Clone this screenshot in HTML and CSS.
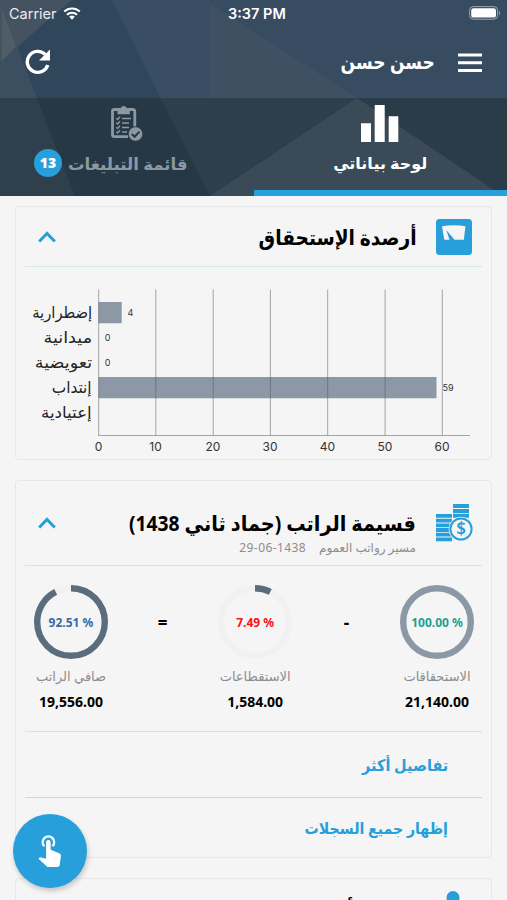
FILE: index.html
```html
<!DOCTYPE html>
<html lang="ar" dir="rtl">
<head>
<meta charset="utf-8">
<title>لوحة بياناتي</title>
<link rel="stylesheet" href="styles.css">
</head>
<body>
<div class="screen">
  <header class="top">
    <svg class="facets" viewBox="0 0 507 196" aria-hidden="true">
      <rect width="507" height="98" fill="#374b61"/>
      <path d="M0 0H30L16 38 37 98H0z" fill="#3c4f60"/>
      <path d="M112 0H210V98H160z" fill="#394e63"/>
      <path d="M72 0H112L160 98H37L16 44z" fill="#30465b"/>
      <path d="M0 0H72L40 27 0 62z" fill="#44535f"/>
      <path d="M2 10 16 46 2 61z" fill="#4f5d68"/>
      <path d="M210 3 357 98H210z" fill="#3e5061"/>
      <rect y="98" width="507" height="98" fill="#2b3c49"/>
      <path d="M0 98H37L75 196H0z" fill="#2f404c"/>
      <path d="M37 98H160L210 196H75z" fill="#263845"/>
      <path d="M160 98H357L210 196z" fill="#2d3e4c"/>
      <path d="M357 98 210 196H503z" fill="#3a4a57"/>
    </svg>
    <div class="status" dir="ltr">
      <span class="carrier">Carrier
        <svg width="18" height="13" viewBox="0 0 18 13" fill="none" stroke="#fff" stroke-width="2.1"><path d="M1.2 4.6a11.4 11.4 0 0 1 15.6 0M4 7.7a7.2 7.2 0 0 1 10 0"/><path d="M6.2 9.8a4 4 0 0 1 5.6 0L9 12.7z" fill="#fff" stroke="none"/></svg>
      </span>
      <span class="clock">3:37 PM</span>
      <svg class="battery" width="32" height="14" viewBox="0 0 32 14"><rect x=".6" y=".6" width="28" height="12.6" rx="3.6" fill="none" stroke="#9aa6b1"/><rect x="2.2" y="2.2" width="24.8" height="9.4" rx="2.2" fill="#fff"/><path d="M30 4.6q2 2.4 0 4.8z" fill="#9aa6b1"/></svg>
    </div>
    <div class="bar">
      <svg class="menu" width="24" height="20" viewBox="0 0 24 20" fill="#fff"><path d="M0 .5h24v3H0zM0 8.3h24v3H0zM0 16h24v3H0z"/></svg>
      <h1 class="user"><span class="t">حسن حسن</span></h1>
      <svg class="refresh" width="26" height="26" viewBox="0 0 26 26"><path d="M22.800 16A10.500 10.500 0 1 1 20.200 5.400" fill="none" stroke="#fff" stroke-width="3.400"/><path d="M25 .5V11.500H14z" fill="#fff"/></svg>
    </div>
    <nav class="tabs">
      <a class="tab active">
        <svg width="38" height="37" viewBox="0 0 38 37" fill="#fff"><path d="M0 18.200h10V37H0zM13.700 0h10v37h-10zM27.700 11.200h9.600V37h-9.600z"/></svg>
        <span class="tab-name"><span class="t">لوحة بياناتي</span></span>
      </a>
      <a class="tab notices">
        <svg width="32" height="36" viewBox="0 0 32 36" fill="none" stroke="#8c98a2"><path d="M3.200 4H22a1.800 1.800 0 0 1 1.800 1.800V21M17 31.200H3.400a1.900 1.900 0 0 1-1.900-1.900V5.800A1.800 1.800 0 0 1 3.200 4" stroke-width="2.800"/><path d="M6.500 8.800V5.500q0-2 3-2 .5-3 3.200-3t3.200 3q3 0 3 2v3.300z" fill="#8c98a2" stroke="none"/><path d="M11 13h9M11 17.500h7M11 22h7M11 26.500h5" stroke-width="1.700"/><path d="m5.300 12.700 1.300 1.200 2.400-2.600M5.300 17.200l1.300 1.200L9 15.800M5.300 21.700l1.300 1.200L9 20.300M5.300 26.200l1.300 1.200L9 24.800" stroke-width="1.400"/><circle cx="24.500" cy="28.500" r="7.200" fill="#8c98a2" stroke="#263845" stroke-width=".7"/><path d="m20.800 28.500 2.800 2.800 4.900-5.200" stroke="#263845" stroke-width="2"/></svg>
        <span class="tab-name"><span class="t">قائمة التبليغات</span><b class="badge">13</b></span>
      </a>
    </nav>
  </header>

  <main class="cards">
    <section class="card balances">
      <div class="card-head">
        <svg class="icon" width="36" height="36" viewBox="0 0 36 36"><rect width="36" height="36" rx="3.500" fill="#279fdb"/><path d="M6 7.300Q18 5 29.500 7.300L27.800 20.800H18.500L10.300 11 13.500 20.800H8.300z" fill="#f5f5f5"/></svg>
        <h2 class="title"><span class="t">أرصدة الإستحقاق</span></h2>
        <svg class="chev" width="18" height="12" viewBox="0 0 18 12" fill="none" stroke="#279fdb" stroke-width="3"><path d="m1.200 10.500 7.800-8 7.800 8"/></svg>
      </div>
      <div class="chart" dir="ltr">
        <ul class="labels" dir="rtl">
          <li><span class="t">إضطرارية</span></li><li><span class="t">ميدانية</span></li><li><span class="t">تعويضية</span></li><li><span class="t">إنتداب</span></li><li><span class="t">إعتيادية</span></li>
        </ul>
        <svg class="plot" width="390" height="170" viewBox="90 285 390 170">
          <path d="M98.500 302h23.200v21.300H98.500zM98.500 377h338v21.300h-338z" fill="#8c98a5"/>
          <path d="M98.700 289.500V435.500M155.800 289.500V435.500M213.200 289.500V435.500M270.400 289.500V435.500M327.700 289.500V435.500M385.100 289.500V435.500M442.300 289.500V435.500M98.500 435.500H470" stroke="#555" stroke-opacity=".5" fill="none"/>
          <g class="values"><text x="127.500" y="316.200">4</text><text x="104.800" y="341">0</text><text x="104.800" y="366">0</text><text x="442.500" y="391.300">59</text></g>
          <g class="ticks"><text x="98.500" y="451">0</text><text x="155.500" y="451">10</text><text x="213" y="451">20</text><text x="270" y="451">30</text><text x="327.500" y="451">40</text><text x="385" y="451">50</text><text x="442" y="451">60</text></g>
        </svg>
      </div>
    </section>

    <section class="card payslip">
      <div class="card-head">
        <svg class="icon" width="38" height="38" viewBox="0 0 38 38"><path d="M18 0h16v4H18zM18 4.900h16v4H18zM18 9.800h16v4H18zM1 10h16v3.800H1zM1 14.700h16v3.800H1zM1 19.400h16v3.800H1zM1 24.100h16v3.800H1zM1 28.800h16v3.800H1zM1 33.500h16v3.800H1z" fill="#279fdb"/><circle cx="26" cy="25" r="12.300" fill="#f5f5f5"/><circle cx="26" cy="25" r="10.600" fill="#f5f5f5" stroke="#279fdb" stroke-width="2"/><text class="dollar" x="26" y="31">$</text></svg>
        <div class="heading">
          <h2 class="title"><span class="t">قسيمة الراتب (جماد ثاني 1438)</span></h2>
          <p class="sub"><span class="t name">مسير رواتب العموم</span><span class="date" dir="ltr">29-06-1438</span></p>
        </div>
        <svg class="chev" width="18" height="12" viewBox="0 0 18 12" fill="none" stroke="#279fdb" stroke-width="3"><path d="m1.200 10.500 7.800-8 7.800 8"/></svg>
      </div>
      <div class="gauges">
        <div class="gauge due">
          <div class="ring"><svg viewBox="0 0 74 74"><circle cx="37" cy="37" r="33.800" stroke="#8c98a5"/></svg><b dir="ltr">100.00 %</b></div>
          <p><span class="t">الاستحقاقات</span></p><strong>21,140.00</strong>
        </div>
        <span class="op">-</span>
        <div class="gauge cut">
          <div class="ring"><svg viewBox="0 0 74 74"><circle cx="37" cy="37" r="33.800" stroke="#f1f1f1"/><circle cx="37" cy="37" r="33.800" pathLength="100" stroke="#5b6c7c" stroke-dasharray="7.490 100" transform="rotate(-90 37 37)"/></svg><b dir="ltr">7.49 %</b></div>
          <p><span class="t">الاستقطاعات</span></p><strong>1,584.00</strong>
        </div>
        <span class="op">=</span>
        <div class="gauge net">
          <div class="ring"><svg viewBox="0 0 74 74"><circle cx="37" cy="37" r="33.800" stroke="#f1f1f1"/><circle cx="37" cy="37" r="33.800" pathLength="100" stroke="#5b6c7c" stroke-dasharray="92.510 100" transform="rotate(-90 37 37)"/></svg><b dir="ltr">92.51 %</b></div>
          <p><span class="t">صافي الراتب</span></p><strong>19,556.00</strong>
        </div>
      </div>
      <a class="link more"><span class="t">تفاصيل أكثر</span></a>
      <a class="link all"><span class="t">إظهار جميع السجلات</span></a>
    </section>

    <section class="card next">
      <svg class="icon" width="36" height="40" viewBox="0 0 36 40" fill="#279fdb"><circle cx="18" cy="6.500" r="6.500"/><path d="M5 38q0-20 13-20t13 20z"/></svg>
      <h2 class="title"><span class="t">أ</span></h2>
    </section>
  </main>

  <button class="fab" aria-label="إجراء سريع">
    <svg width="24" height="34" viewBox="0 0 24 34"><path d="M6.300 12.300A5.800 5.800 0 1 1 14.500 12.300" fill="none" stroke="#fff" stroke-width="2.300"/><path d="M8.100 8.400a2.300 2.300 0 0 1 4.600 0V15.800l9 3.700q1.500.8 1.200 2.600L21.700 31q-.4 2-2.200 2H9.500L.5 24.800 2 23.200l6.100 1.500z" fill="#fff"/></svg>
  </button>
</div>
</body>
</html>
```
FILE: styles.css
```css
* { box-sizing: border-box; }
body, h1, h2, p, ul { margin: 0; padding: 0; }
body { font-family: "Noto Sans", "DejaVu Sans", sans-serif; background: #f5f5f5; color: #000; }
svg { display: block; flex: none; }
.t { display: inline-block; white-space: nowrap; transform-origin: right center; }
.screen { position: relative; width: 507px; height: 900px; overflow: hidden; }

.top { position: relative; height: 196px; color: #fff; }
.facets { position: absolute; inset: 0; width: 507px; height: 196px; }
.status { position: relative; display: flex; align-items: center; justify-content: space-between; height: 27px; padding: 0 4px 0 9px; font: 14.500px Inter, sans-serif; }
.carrier { display: flex; align-items: center; gap: 6px; width: 219px; color: #e9edf1; }
.clock { font-weight: 600; font-size: 14.500px; }
.battery { margin: -1px 2px 0 auto; }
.bar { position: relative; display: flex; align-items: center; height: 71px; padding: 0 25px; }
.user { font-size: 20px; margin: -2px 23px 0 0; line-height: 30px; }
.user .t { transform: scaleX(.85); }
.refresh { margin: -2px auto 0 0; }
.tabs { position: relative; display: flex; height: 98px; }
.tab { width: 50%; display: flex; flex-direction: column; align-items: center; padding-top: 7px; color: #8c98a2; }
.tab svg { height: 37px; }
.tab.active { color: #fff; border-bottom: 6px solid #279fdb; }
.tab-name { display: flex; align-items: center; gap: 6px; height: 28px; margin-top: 7px; font-size: 16px; font-weight: 700; }
.notices .tab-name { margin-right: 32px; font-size: 16.500px; }
.badge { width: 28px; height: 28px; border-radius: 50%; background: #279fdb; color: #fff; font-size: 14px; line-height: 28px; text-align: center; }

.cards { display: flex; flex-direction: column; gap: 20px; padding: 10px 15px; }
.card { border: 1.500px solid #e5e7e8; border-radius: 4px; padding: 0 9px; flex: none; }
.balances { height: 254px; }
.payslip { height: 378px; }
.next { height: 100px; display: flex; padding: 12px 20px; gap: 81px; }
.next .title { padding-top: 4px; }
.card-head { display: flex; align-items: center; border-bottom: 1.500px solid #d3e9ee; padding: 0 10px 0 13px; height: 60px; }
.card-head .icon { margin-left: 19px; }
.chev { margin-right: auto; }
.title { font-size: 21px; line-height: 30px; }
.balances .title .t { transform: scaleX(.885); }
.payslip .title .t { transform: scaleX(.917); }
.chart { display: flex; padding-top: 18px; }
.labels { list-style: none; width: 67px; padding-top: 15px; }
.labels li { height: 25px; line-height: 25px; font-size: 16px; color: #222; }
.labels li:nth-child(1) .t { transform: scaleX(.92); }
.labels li:nth-child(2) .t, .labels li:nth-child(3) .t { transform: scaleX(1.1); }
.labels li:nth-child(4) .t { transform: scaleX(.96); }
.labels li:nth-child(5) .t { transform: scaleX(1.04); }
.plot { margin-left: -2px; font-family: Inter, sans-serif; }
.values { font-size: 9px; fill: #333; }
.ticks { font-size: 12px; text-anchor: middle; fill: #333; }

.payslip .card-head { height: 85px; padding-right: 9px; border-color: #cce5f3; }
.heading { padding-top: 19px; }
.dollar { font: 600 17px "Noto Sans", sans-serif; fill: #279fdb; text-anchor: middle; }
.sub { display: flex; gap: 13px; font-size: 12px; line-height: 20px; color: #8d8d8d; }
.date { letter-spacing: .4px; }
.gauges { display: flex; justify-content: space-between; padding: 19px 8px 0 9px; height: 166px; border-bottom: 1.500px solid #cfe4ee; }
.gauge { width: 74px; display: flex; flex-direction: column; align-items: center; }
.cut { margin: 0 1px 0 -1px; }
.cut + .op { margin: 0 1px 0 -1px; }
.ring { display: grid; place-items: center; width: 74px; height: 74px; }
.ring > * { grid-area: 1 / 1; }
.ring svg { width: 74px; height: 74px; fill: none; stroke-width: 6.400px; }
.ring b { font-size: 12px; white-space: nowrap; }
.due b { color: #1d9f94; } .cut b { color: #f5121d; } .net b { color: #3b68a5; }
.gauge p { font-size: 13px; height: 20px; line-height: 20px; margin-top: 7px; color: #8d8d8d; }
.gauge strong { font-size: 14px; line-height: 20px; margin-top: 6px; }
.op { font-weight: 700; font-size: 17px; line-height: 76px; }
.link { display: flex; align-items: center; height: 66px; padding-right: 34px; font-size: 16px; font-weight: 700; color: #279fdb; }
.more { border-bottom: 1.500px solid #d3d6d8; }
.more .t { transform: scaleX(.905); }
.all { height: 60px; }
.all .t { transform: scaleX(.885); }
.fab { position: absolute; left: 13px; top: 814px; width: 74px; height: 74px; border: 0; border-radius: 50%; background: #279fdb; box-shadow: 1px 3px 5px #0003; display: grid; place-items: center; padding: 0; }
```
